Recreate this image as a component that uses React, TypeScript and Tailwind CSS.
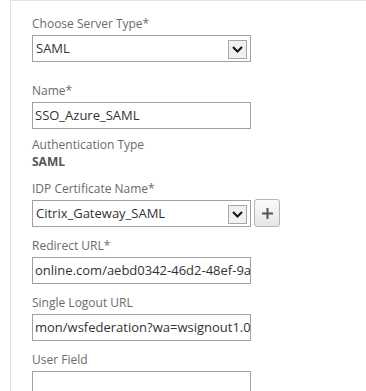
import React from "react";

const font = { fontFamily: '"Open Sans", "Noto Sans", "DejaVu Sans", sans-serif' };

function Chevron() {
  return (
    <div className="absolute right-[3px] top-[4px] w-[19px] h-[19px] bg-[#f0f0f0] border border-[#a8a8a8] flex items-center justify-center">
      <svg width="11" height="7" viewBox="0 0 11 7">
        <path d="M1 1 L5.5 5.5 L10 1" fill="none" stroke="#111" strokeWidth="2" />
      </svg>
    </div>
  );
}

function Label({ children }: { children: React.ReactNode }) {
  return <div className="text-[12px] leading-[17px] text-[#6b6b6b] mb-[3px]">{children}</div>;
}

function Select({ value }: { value: string }) {
  return (
    <div className="relative w-[219px] h-[27px] shrink-0 border border-[#a0a0a0] bg-white">
      <div className="pl-[3px] text-[13px] leading-[25px] text-[#333]">{value}</div>
      <Chevron />
    </div>
  );
}

function Input({ value, bottomOpen }: { value: string; bottomOpen?: boolean }) {
  return (
    <div
      className={
        "w-[219px] border border-[#a0a0a0] bg-white overflow-hidden whitespace-nowrap " +
        (bottomOpen ? "h-[30px]" : "h-[27px]")
      }
    >
      <div className="pl-[2px] text-[13px] leading-[25px] text-[#333]">{value}</div>
    </div>
  );
}

export default function App() {
  return (
    <div className="w-[366px] h-[391px] bg-white overflow-hidden" style={font}>
      <div className="ml-[10px] h-full border-l border-t border-[#e2e2e2] pl-[21px] pt-[14px]">
        <Label>Choose Server Type*</Label>
        <Select value="SAML" />
        <div className="mt-[20px]">
          <Label>Name*</Label>
          <Input value="SSO_Azure_SAML" />
        </div>
        <div className="mt-[7px]">
          <div className="text-[12px] leading-[17px] text-[#6b6b6b]">Authentication Type</div>
          <div className="text-[12px] leading-[17px] font-bold text-[#555]">SAML</div>
        </div>
        <div className="mt-[10px]">
          <Label>IDP Certificate Name*</Label>
          <div className="flex items-start gap-[3px]">
            <Select value="Citrix_Gateway_SAML" />
            <button className="-mt-[1px] w-[26px] h-[28px] rounded-[3px] border border-[#b4b4b4] bg-gradient-to-b from-[#fbfbfb] to-[#e6e6e6] flex items-center justify-center">
              <svg width="11" height="11" viewBox="0 0 11 11">
                <path d="M5.5 0 V11 M0 5.5 H11" stroke="#555" strokeWidth="2" />
              </svg>
            </button>
          </div>
        </div>
        <div className="mt-[10px]">
          <Label>Redirect URL*</Label>
          <Input value="online.com/aebd0342-46d2-48ef-9a3b-7c1f0e2d4a55/saml2" />
        </div>
        <div className="mt-[10px]">
          <Label>Single Logout URL</Label>
          <Input value="mon/wsfederation?wa=wsignout1.0" />
        </div>
        <div className="mt-[10px]">
          <Label>User Field</Label>
          <Input value="" bottomOpen />
        </div>
      </div>
    </div>
  );
}
